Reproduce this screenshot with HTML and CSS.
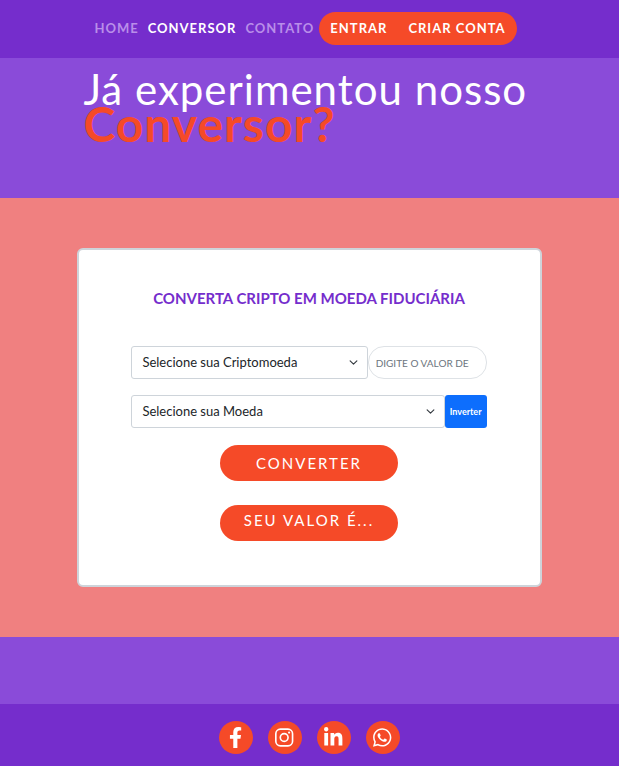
FILE: index.html
```html
<!DOCTYPE html>
<html lang="pt-BR">
<head>
<meta charset="utf-8">
<meta name="viewport" content="width=device-width, initial-scale=1">
<title>Conversor</title>
<link rel="stylesheet" href="styles.css">
</head>
<body>
<nav class="nav">
  <a class="nav-link" href="#">HOME</a>
  <a class="nav-link active" href="#">CONVERSOR</a>
  <a class="nav-link" href="#">CONTATO</a>
  <div class="account">
    <a href="#">ENTRAR</a>
    <a href="#">CRIAR CONTA</a>
  </div>
</nav>
<header class="hero">
  <h1>Já experimentou nosso <strong>Conversor?</strong></h1>
</header>
<main class="main">
  <form class="card">
    <h2>CONVERTA CRIPTO EM MOEDA FIDUCIÁRIA</h2>
    <div class="row">
      <div class="select-wrap">
        <select aria-label="Criptomoeda"><option>Selecione sua Criptomoeda</option></select>
        <svg class="chevron" viewBox="0 0 16 16"><path d="m2 5 6 6 6-6"/></svg>
      </div>
      <input class="amount" type="text" aria-label="Valor" placeholder="DIGITE O VALOR DESEJADO">
    </div>
    <div class="row">
      <div class="select-wrap">
        <select aria-label="Moeda"><option>Selecione sua Moeda</option></select>
        <svg class="chevron" viewBox="0 0 16 16"><path d="m2 5 6 6 6-6"/></svg>
      </div>
      <button class="invert" type="button">Inverter</button>
    </div>
    <button class="pill" type="button">CONVERTER</button>
    <output class="pill result">SEU VALOR É...</output>
  </form>
</main>
<div class="band"></div>
<footer class="footer">
  <a href="#" aria-label="Facebook"><svg viewBox="0 0 320 512"><path d="M279.14 288l14.22-92.66h-88.91v-60.13c0-25.35 12.42-50.06 52.24-50.06h40.42V6.26S260.43 0 225.36 0c-73.22 0-121.08 44.38-121.08 124.72v70.62H22.89V288h81.39v224h100.17V288z"/></svg></a>
  <a href="#" aria-label="Instagram"><svg viewBox="0 0 448 512"><rect class="line" x="20" y="52" width="408" height="408" rx="112"/><circle class="line" cx="224" cy="256" r="95"/><circle cx="344" cy="136" r="27"/></svg></a>
  <a href="#" aria-label="LinkedIn"><svg viewBox="0 0 448 512"><path d="M100.28 448H7.4V148.9h92.88zM53.79 108.1C24.09 108.1 0 83.5 0 53.8a53.79 53.79 0 0 1 107.58 0c0 29.7-24.1 54.3-53.79 54.3zM447.9 448h-92.68V302.4c0-34.7-.7-79.2-48.29-79.2-48.29 0-55.69 37.7-55.69 76.7V448h-92.78V148.9h89.08v40.8h1.3c12.4-23.5 42.69-48.3 87.88-48.3 94 0 111.28 61.9 111.28 142.3V448z"/></svg></a>
  <a href="#" aria-label="WhatsApp"><svg viewBox="0 0 448 512"><path d="M380.9 97.1C339 55.1 283.2 32 223.9 32c-122.4 0-222 99.6-222 222 0 39.1 10.2 77.3 29.6 111L0 480l117.7-30.9c32.4 17.7 68.9 27 106.1 27h.1c122.3 0 224.1-99.6 224.1-222 0-59.3-25.2-115-67.1-157zm-157 341.6c-33.2 0-65.7-8.9-94-25.7l-6.7-4-69.8 18.3L72 359.2l-4.4-7c-18.5-29.4-28.2-63.3-28.2-98.2 0-101.7 82.8-184.5 184.6-184.5 49.3 0 95.6 19.2 130.4 54.1 34.8 34.9 56.2 81.2 56.1 130.5 0 101.8-84.9 184.6-186.6 184.6zm101.2-138.2c-5.5-2.8-32.8-16.2-37.9-18-5.1-1.9-8.8-2.8-12.5 2.8-3.7 5.6-14.3 18-17.6 21.8-3.2 3.7-6.5 4.2-12 1.4-32.6-16.3-54-29.1-75.5-66-5.7-9.8 5.7-9.1 16.3-30.3 1.8-3.7.9-6.9-.5-9.7-1.4-2.8-12.5-30.1-17.1-41.2-4.5-10.8-9.1-9.3-12.5-9.5-3.2-.2-6.9-.2-10.6-.2-3.7 0-9.7 1.4-14.8 6.9-5.1 5.6-19.4 19-19.4 46.3 0 27.3 19.9 53.7 22.6 57.4 2.8 3.7 39.1 59.7 94.8 83.8 35.2 15.2 49 16.5 66.6 13.9 10.7-1.6 32.8-13.4 37.4-26.4 4.6-13 4.6-24.1 3.2-26.4-1.3-2.5-5-3.9-10.5-6.6z"/></svg></a>
</footer>
</body>
</html>
```
FILE: styles.css
```css
* { box-sizing: border-box; }
body {
  margin: 0;
  min-height: 100vh;
  display: flex;
  flex-direction: column;
  background: #752dcc;
  font-family: Lato, "Liberation Sans", sans-serif;
}
a { color: inherit; text-decoration: none; }
button, input, select { font-family: inherit; }

.nav {
  display: flex;
  justify-content: center;
  align-items: center;
  padding: 12px 16px 13px 8px;
  font-size: 13px;
  line-height: 17px;
  font-weight: 700;
  letter-spacing: 1px;
  color: #fff;
  white-space: nowrap;
}
.nav-link { margin-right: 9px; color: #b98ee9; }
.nav-link.active { color: #fff; }
.nav-link:nth-child(3) { margin-right: 5px; }
.account {
  display: flex;
  gap: 21px;
  padding: 8px 11px;
  border-radius: 17px;
  background: #f54a28;
}

.hero { background: #8a4bd9; padding: 9px 13% 61px; }
.hero h1 {
  margin: 0 0 0 3px;
  font-size: 42px;
  line-height: 44px;
  font-weight: 400;
  letter-spacing: 1px;
  color: #fff;
  white-space: nowrap;
}
.hero strong {
  display: block;
  font-size: 48px;
  line-height: 26px;
  font-weight: 700;
  color: #f54a28;
}

.main { background: #f08080; padding: 50px 0; }
.card {
  width: 75%;
  margin: 0 auto;
  padding: 38px 53px 44px 52px;
  border: 2px solid #ced4da;
  border-radius: 6px;
  background: #fff;
  display: flex;
  flex-direction: column;
}
.card h2 {
  margin: 0 0 38px;
  font-size: 15px;
  line-height: 20px;
  font-weight: 700;
  color: #752dcc;
  text-align: center;
}
.row { display: flex; height: 33px; margin-bottom: 16px; }
.select-wrap { position: relative; flex: 1; min-width: 0; }
select {
  appearance: none;
  width: 100%;
  height: 100%;
  padding: 0 32px 2px 10px;
  border: 1px solid #ced4da;
  border-radius: 3px;
  background: #fff;
  color: #212529;
  font-size: 13px;
}
.chevron {
  position: absolute;
  right: 10px;
  top: 12px;
  width: 9px;
  height: 9px;
  fill: none;
  stroke: #343a40;
  stroke-width: 2;
  stroke-linecap: round;
  stroke-linejoin: round;
  pointer-events: none;
}
.amount {
  width: 119px;
  padding: 0 17px 0 7px;
  border: 1px solid #dee2e6;
  border-radius: 16px;
  font-size: 10px;
}
.amount::placeholder { color: #6c757d; }
.invert {
  width: 42px;
  padding: 0;
  border: 0;
  border-radius: 3px;
  background: #0d6efd;
  color: #fff;
  font-size: 9px;
  font-weight: 700;
}
.pill {
  display: block;
  align-self: center;
  width: 50%;
  height: 36px;
  margin-top: 1px;
  padding: 0;
  border: 0;
  border-radius: 18px;
  background: #f54a28;
  color: #fff;
  font-size: 15px;
  line-height: 36px;
  letter-spacing: 2px;
  text-align: center;
  white-space: nowrap;
}
.result { margin-top: 24px; line-height: 30px; }

.band { height: 67px; background: #8a4bd9; }
.footer { display: flex; justify-content: center; gap: 15px; padding: 17px 1px 12px 0; }
.footer a {
  width: 34px;
  height: 33px;
  padding-bottom: 1px;
  border-radius: 50%;
  background: #f54a28;
  display: flex;
  align-items: center;
  justify-content: center;
}
.footer svg { height: 21px; fill: #fff; }
.line { fill: none; stroke: #fff; stroke-width: 40; }
```
